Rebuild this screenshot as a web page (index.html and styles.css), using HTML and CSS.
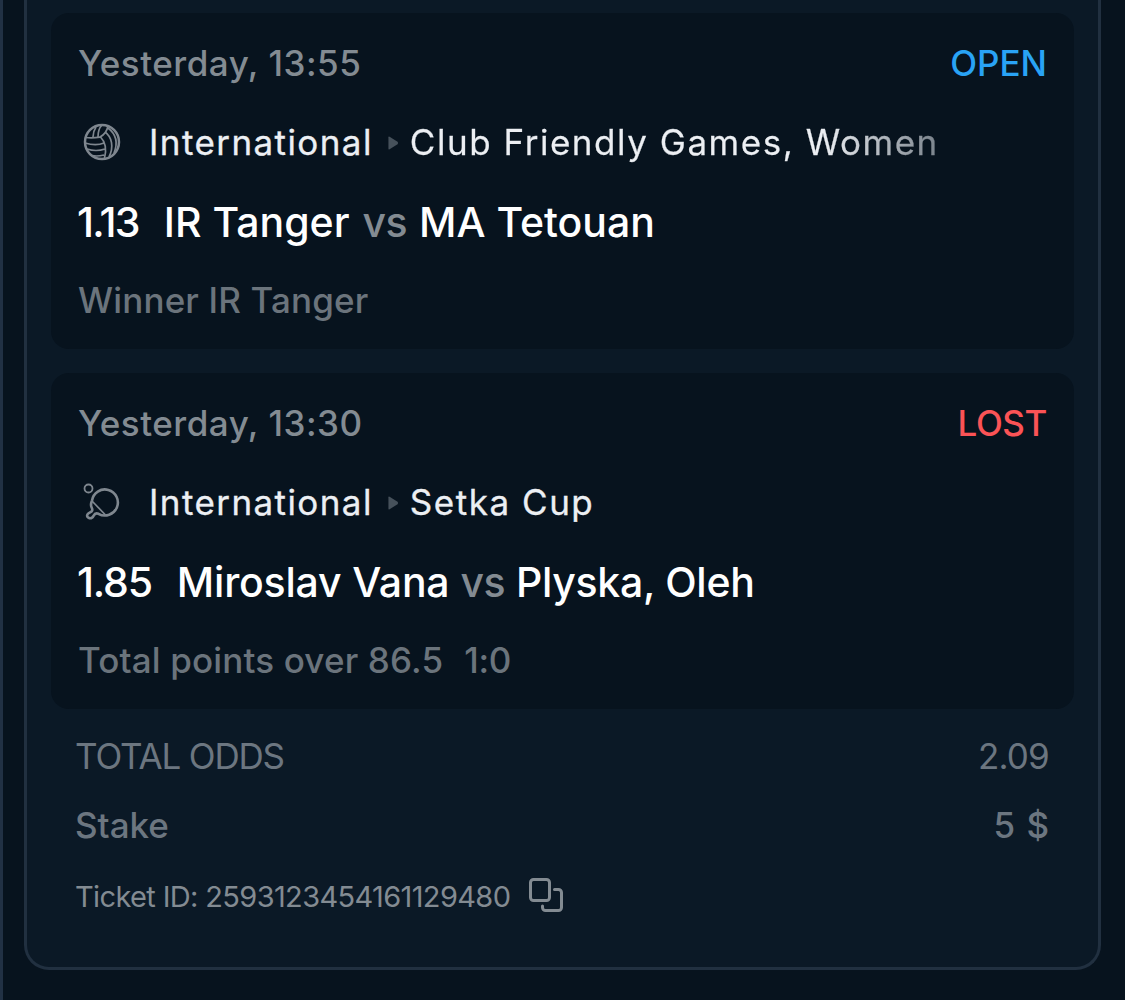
FILE: index.html
```html
<!DOCTYPE html>
<html lang="en">

<head>
  <meta charset="UTF-8">
  <meta name="viewport" content="width=device-width, initial-scale=1.0">
  <title>Bet History</title>
  <link rel="stylesheet" href="styles.css">
</head>

<body>
  <div class="panel">
    <div class="ticket">

      <div class="bet">
        <div class="row">
          <span class="date">Yesterday, 13:55</span>
          <span class="status open">OPEN</span>
        </div>
        <div class="row league">
          <svg class="sport-icon" viewBox="0 0 40 40">
            <circle cx="20" cy="20" r="17" stroke-width="2.5" />
            <path d="M14 5c-2 3-3 6-3 10M20 3c-3 3-4 7-4 12M26 4c-1 5-4 9-8 11" />
            <path d="M3.5 15.5c7 1 12 0 15-.5 3 3 7 9 4 21M3 21c7 2 14 2 19 0M5 27c6 2 12 2 18 0M10 33.5c4 1 8 .5 12-.5" />
            <path d="M23 10c7 5 9 15 4 25M26 6c8 6 10 15 6 25" />
          </svg>
          <span class="country">International</span>
          <svg class="arrow" viewBox="0 0 10 14"><path d="M1 2v10q0 1 1 .4l7-4.4q1-1 0-2L2 1.6Q1 1 1 2z" /></svg>
          <span class="league-name fade">Club Friendly Games, Women</span>
        </div>
        <div class="row match">
          <span class="odds narrow">1.13</span>
          <span class="home">IR Tanger</span>
          <span class="vs">vs</span>
          <span class="away">MA Tetouan</span>
        </div>
        <div class="row market">
          <span class="pick">Winner IR Tanger</span>
        </div>
      </div>

      <div class="bet">
        <div class="row">
          <span class="date">Yesterday, 13:30</span>
          <span class="status lost">LOST</span>
        </div>
        <div class="row league">
          <svg class="sport-icon" viewBox="0 0 40 40">
            <circle cx="6.5" cy="6.5" r="4" stroke-width="1.8" />
            <path stroke-width="2.6" d="M10 18.5a13 13 0 1 1 6.5 13.3c-2.5-1-4 0-5 2-2 4-7 2.5-6.3-.8.5-2 4.3-2.500 5-4.500.6-2-1.200-3-1.200-5.500 0-2 .4-3 1-4.500z" />
            <path d="M10 19l13.500 14" />
          </svg>
          <span class="country">International</span>
          <svg class="arrow" viewBox="0 0 10 14"><path d="M1 2v10q0 1 1 .4l7-4.4q1-1 0-2L2 1.6Q1 1 1 2z" /></svg>
          <span class="league-name">Setka Cup</span>
        </div>
        <div class="row match tight">
          <span class="odds">1.85</span>
          <span class="home">Miroslav Vana</span>
          <span class="vs">vs</span>
          <span class="away">Plyska, Oleh</span>
        </div>
        <div class="row market">
          <span class="pick">Total points over 86.5</span>
          <span class="score">1:0</span>
        </div>
      </div>

      <div class="summary">
        <div class="summary-row">
          <span class="total-label">TOTAL ODDS</span>
          <span class="total-value">2.09</span>
        </div>
        <div class="summary-row stake-row">
          <span class="stake-label">Stake</span>
          <span class="stake-value">5 $</span>
        </div>
        <div class="summary-row ticket-row">
          <span class="ticket-id">Ticket ID: 2593123454161129480</span>
          <svg class="copy-icon" viewBox="0 0 36 36">
            <rect x="2.5" y="2.5" width="19" height="21" rx="3" />
            <path d="M26.5 12.5h4a3 3 0 0 1 3 3v15a3 3 0 0 1-3 3h-13a3 3 0 0 1-3-3v-1.5" />
          </svg>
        </div>
      </div>

    </div>
  </div>
</body>

</html>
```

FILE: styles.css
```css
* {
  box-sizing: border-box;
}

body {
  margin: 0;
  height: 1000px;
  overflow: hidden;
  background-color: #07131e;
  font-family: Inter, "Liberation Sans", sans-serif;
  font-weight: 500;
  font-size: 35px;
  color: #838b92;
}

.panel {
  height: 1000px;
  padding: 0 24px 30px 21px;
  border-left: 3px solid #213144;
}

.ticket {
  height: 970px;
  padding: 13px 24px 0;
  border: 3px solid #213040;
  border-top: none;
  border-radius: 0 0 25px 25px;
  background-color: #0b1926;
}

.bet {
  height: 336px;
  margin-bottom: 24px;
  padding: 10px 27px;
  border-radius: 18px;
  background-color: #07131e;
}

.row {
  display: flex;
  align-items: center;
  height: 79px;
  white-space: nowrap;
}

.date {
  letter-spacing: 0.5px;
}

.status {
  margin-left: auto;
}

.open {
  color: #29a3f5;
}

.lost {
  color: #fb5356;
  letter-spacing: -0.4px;
}

.league {
  color: #eceff3;
  font-weight: 400;
}

.country {
  letter-spacing: 1.42px;
  -webkit-text-stroke: 0.3px #eceff3;
}

.league-name {
  letter-spacing: 1.53px;
  -webkit-text-stroke: 0.3px #eceff3;
}

.sport-icon {
  width: 40px;
  height: 40px;
  margin: 0 27px 0 4px;
  fill: none;
  stroke: #7f878f;
  stroke-width: 1.7;
}

.arrow {
  width: 12px;
  height: 16px;
  margin: 2px 11px 0 14px;
  fill: #46515b;
}

.fade {
  background: linear-gradient(to right, #eceff3 78%, #79828b 100%);
  -webkit-background-clip: text;
  background-clip: text;
  color: transparent;
  -webkit-text-stroke: 0.3px transparent;
}

.match {
  padding-top: 3px;
  font-size: 41px;
  color: #fff;
}

.tight {
  letter-spacing: -0.2px;
}

.odds {
  margin-left: -1px;
  margin-right: 25px;
  letter-spacing: -1.2px;
}

.narrow {
  letter-spacing: -1.7px;
}

.vs {
  margin: 0 12px 0 13px;
  color: #838b92;
  letter-spacing: -0.6px;
}

.tight .vs {
  margin: 0 11px;
}

.tight .away {
  letter-spacing: -0.3px;
}

.market {
  color: #6b747c;
}

.pick {
  letter-spacing: 0.15px;
}

.score {
  margin-left: 21px;
  letter-spacing: -0.3px;
}

.summary {
  margin: -12px 24px 0;
  color: #6c7680;
}

.summary-row {
  display: flex;
  align-items: center;
  justify-content: space-between;
  height: 70px;
}

.total-label {
  letter-spacing: -1.15px;
}

.total-value {
  margin-right: 1px;
  letter-spacing: -0.8px;
}

.total-label,
.total-value {
  font-weight: 400;
}

.stake-row {
  padding-bottom: 2px;
}

.stake-value {
  letter-spacing: 1px;
}

.ticket-row {
  justify-content: flex-start;
  gap: 18px;
  font-size: 29px;
  font-weight: 400;
  letter-spacing: -0.64px;
  color: #838b92;
}

.copy-icon {
  width: 36px;
  height: 36px;
  margin-top: -2px;
  fill: none;
  stroke: #838b92;
  stroke-width: 3;
  stroke-linecap: round;
}
```
